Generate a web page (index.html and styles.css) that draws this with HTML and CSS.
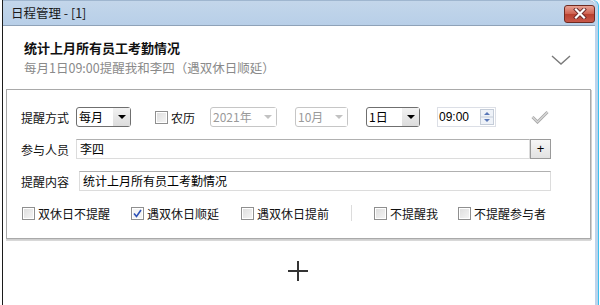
FILE: index.html
```html
<!DOCTYPE html>
<html>
<head>
    <title>日程管理</title>
    <link rel="stylesheet" href="styles.css">
</head>
<body>
    <div class="window">
        <div class="titlebar">
            <span class="title">日程管理 - [1]</span>
            <button class="close-btn">
                <svg width="16" height="11" viewBox="0 0 16 11">
                    <path d="M4 1.5 L12 9.5 M12 1.5 L4 9.5" stroke="#6a2a2a" stroke-width="4" stroke-linecap="square"/>
                    <path d="M4 1.5 L12 9.5 M12 1.5 L4 9.5" stroke="#fff" stroke-width="2.2" stroke-linecap="square"/>
                </svg>
            </button>
        </div>

        <div class="content">
            <div class="header">
                <div class="header-text">
                    <div class="main-title">统计上月所有员工考勤情况</div>
                    <div class="sub-title">每月1日09:00提醒我和李四（遇双休日顺延）</div>
                </div>
                <svg class="chevron" width="20" height="10" viewBox="0 0 20 10">
                    <path d="M1 1 L10 9 L19 1" fill="none" stroke="#7a7a7a" stroke-width="1.4"/>
                </svg>
            </div>

            <div class="panel">
                <div class="row">
                    <span class="label">提醒方式</span>
                    <div class="combo w-mode">
                        <span class="combo-text">每月</span>
                        <span class="combo-arrow"></span>
                    </div>
                    <label class="check lunar"><span class="box"></span>农历</label>
                    <div class="combo disabled w-year">
                        <span class="combo-text">2021年</span>
                        <span class="combo-arrow"></span>
                    </div>
                    <div class="combo disabled w-month">
                        <span class="combo-text">10月</span>
                        <span class="combo-arrow"></span>
                    </div>
                    <div class="combo w-day">
                        <span class="combo-text">1日</span>
                        <span class="combo-arrow"></span>
                    </div>
                    <div class="time-box">
                        <span class="time-text">09:00</span>
                        <span class="spinner">
                            <svg width="14" height="16" viewBox="0 0 14 16">
                                <rect x="0.5" y="0.5" width="13" height="15" fill="#eef2f8" stroke="#c4ccd8"/>
                                <line x1="1" y1="8" x2="13" y2="8" stroke="#c4ccd8"/>
                                <path d="M4 6 L7 3 L10 6 Z" fill="#5a78b8"/>
                                <path d="M4 10 L7 13 L10 10 Z" fill="#5a78b8"/>
                            </svg>
                        </span>
                    </div>
                    <svg class="ok-icon" width="18" height="14" viewBox="0 0 18 14">
                        <path d="M1.5 7 L6.5 12 L16.5 2" fill="none" stroke="#a9a9a9" stroke-width="3"/>
                        <path d="M1.5 7 L6.5 12 L16.5 2" fill="none" stroke="#d8d8d8" stroke-width="1.2"/>
                    </svg>
                </div>

                <div class="row">
                    <span class="label">参与人员</span>
                    <div class="textbox w-people">李四</div>
                    <button class="add-btn">+</button>
                </div>

                <div class="row">
                    <span class="label">提醒内容</span>
                    <div class="textbox w-content">统计上月所有员工考勤情况</div>
                </div>

                <div class="row options">
                    <label class="check opt1"><span class="box"></span>双休日不提醒</label>
                    <label class="check opt2"><span class="box checked">
                        <svg width="9" height="9" viewBox="0 0 9 9"><path d="M1 4.5 L3.5 7.5 L8 1" fill="none" stroke="#2e52b8" stroke-width="1.6"/></svg>
                    </span>遇双休日顺延</label>
                    <label class="check opt3"><span class="box"></span>遇双休日提前</label>
                    <span class="sep"></span>
                    <label class="check opt4"><span class="box"></span>不提醒我</label>
                    <label class="check opt5"><span class="box"></span>不提醒参与者</label>
                </div>
            </div>

            <div class="add-area">
                <svg width="22" height="22" viewBox="0 0 22 22">
                    <path d="M11 1 V21 M1 11 H21" stroke="#333" stroke-width="2"/>
                </svg>
            </div>
        </div>
    </div>
</body>
</html>
```

FILE: styles.css
```css
body {
    margin: 0;
    width: 600px;
    height: 305px;
    overflow: hidden;
    background: #fff;
    font-family: "Noto Sans CJK SC", "Liberation Sans", sans-serif;
    font-size: 12px;
    color: #000;
}

.window {
    margin-left: 2px;
    width: 592px;
    height: 310px;
    border-left: 1px solid #1c1c1c;
    border-right: 3px solid #bcd4ec;
    box-shadow: 1px 0 0 #3cc0ee;
    border-top-right-radius: 6px;
    background: #fff;
}

.titlebar {
    height: 24px;
    display: flex;
    align-items: center;
    justify-content: space-between;
    padding: 0 0 0 8px;
    background: linear-gradient(#c3d6ea, #b8cfe8);
    border-top: 1px solid #9fb6cf;
    border-bottom: 1px solid #8fa2b8;
    border-top-right-radius: 6px;
}

.title { color: #1a1a1a; line-height: 24px; font-size: 12.5px; }

.close-btn {
    width: 31px;
    height: 18px;
    margin-top: 1px;
    padding: 0;
    display: flex;
    align-items: center;
    justify-content: center;
    border: 1px solid #6e2b22;
    border-radius: 3px;
    background: linear-gradient(#e7a193, #cf6150 50%, #b8402e 51%, #c8584a);
}

.content { background: #fff; }

.header {
    height: 63px;
    display: flex;
    align-items: center;
    justify-content: space-between;
    padding: 0 24px 0 21px;
}

.header-text { margin-top: 0; }
.main-title { font-size: 13px; font-weight: bold; line-height: 20px; color: #111; }
.sub-title { font-size: 12.5px; line-height: 20px; color: #8a8a8a; }
.chevron { margin-top: 4px; }

.panel {
    margin: 0 0 0 3px;
    width: 585px;
    border: 1px solid #a9a9a9;
    box-shadow: 1px 1px 0 #cfcfcf, 0 2px 0 #d8d8d8;
    padding: 17px 0 0 14px;
    box-sizing: border-box;
    height: 150px;
}

.row {
    display: flex;
    align-items: center;
    height: 20px;
    margin-bottom: 12px;
}

.label { width: 55px; color: #111; }

.combo {
    height: 18px;
    display: flex;
    align-items: center;
    justify-content: space-between;
    border: 1px solid #6f6f6f;
    border-radius: 3px;
    background: #fff;
    padding-left: 2px;
}
.combo-text { line-height: 18px; }
.combo-arrow {
    width: 17px;
    height: 18px;
    background: linear-gradient(#f2f2f2, #dcdcdc);
    position: relative;
}
.combo-arrow::after {
    content: "";
    position: absolute;
    left: 5px;
    top: 7px;
    border-left: 4px solid transparent;
    border-right: 4px solid transparent;
    border-top: 4px solid #000;
}
.combo.disabled { border-color: #c6c6c6; color: #9a9a9a; }
.combo.disabled .combo-arrow { background: #fff; }
.combo.disabled .combo-arrow::after { border-top-color: #c2c2c2; }

.w-mode { width: 51px; }
.w-year { width: 63px; margin-left: 15px; }
.w-month { width: 49px; margin-left: 18px; }
.w-day { width: 50px; margin-left: 18px; }

.check { display: flex; align-items: center; color: #111; }
.box {
    width: 11px;
    height: 11px;
    border: 1px solid #8f8f8f;
    background: linear-gradient(135deg, #dcdcdc, #f6f6f6);
    box-shadow: inset 0 0 0 1px #fff;
    margin-right: 3px;
    display: flex;
    align-items: center;
    justify-content: center;
}
.box.checked { background: #f4f4f4; }
.lunar { margin-left: 24px; }

.time-box {
    width: 56px;
    height: 18px;
    margin-left: 17px;
    border: 1px solid #dcdfe6;
    display: flex;
    align-items: center;
    justify-content: space-between;
    padding-left: 1px;
}
.time-text { font-family: "Liberation Sans", sans-serif; font-size: 12px; }
.spinner { display: flex; margin-right: 1px; }

.ok-icon { margin-left: 35px; margin-top: -1px; }

.textbox {
    height: 18px;
    line-height: 18px;
    border: 1px solid #dcdcdc;
    border-top-color: #b0b0b0;
    padding-left: 3px;
    box-sizing: content-box;
}
.w-people { width: 449px; }
.w-content { width: 467px; margin-left: 3px; }

.add-btn {
    width: 21px;
    height: 20px;
    padding: 0;
    border: 1px solid #9a9a9a;
    background: linear-gradient(#f6f6f6, #e2e2e2);
    font-size: 13px;
    line-height: 16px;
    font-family: "Liberation Sans", sans-serif;
}

.opt1 { margin-left: 1px; }
.opt2 { margin-left: 21px; }
.opt3 { margin-left: 22px; }
.sep { width: 1px; height: 16px; background: #dcdcdc; margin-left: 22px; }
.opt4 { margin-left: 22px; }
.opt5 { margin-left: 20px; }

.add-area {
    display: flex;
    justify-content: center;
    padding-top: 21px;
    margin-left: -2px;
}
```
